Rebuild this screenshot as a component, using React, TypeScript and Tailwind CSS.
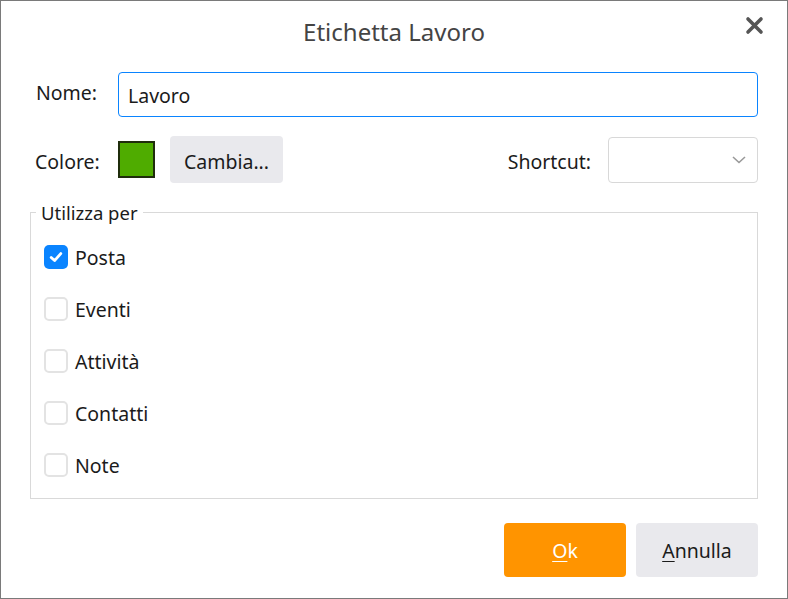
import React from "react";

function Check({ checked, label }: { checked?: boolean; label: string }) {
  return (
    <div className="flex h-[52px] items-center gap-[7px]">
      {checked ? (
        <div className="flex h-[24px] w-[24px] items-center justify-center rounded-[5px] bg-[#0a84ff]">
          <svg width="14" height="14" viewBox="0 0 14 14" fill="none">
            <path d="M2.2 7.4 L5.6 10.6 L11.8 3.6" stroke="white" strokeWidth="2.8" strokeLinecap="round" strokeLinejoin="round" />
          </svg>
        </div>
      ) : (
        <div className="h-[24px] w-[24px] rounded-[5px] border-2 border-[#e3e3e3] bg-white" />
      )}
      <span className="pt-[2px] text-[19.5px] text-[#1b1b1b]">{label}</span>
    </div>
  );
}

export default function App() {
  const uses = ["Posta", "Eventi", "Attività", "Contatti", "Note"];
  return (
    <div
      className="flex h-[599px] w-[788px] flex-col border border-[#7a7a7a] bg-white"
      style={{ fontFamily: '"Noto Sans", "Open Sans", sans-serif' }}
    >
      <div className="relative flex h-[63px] items-center justify-center">
        <div className="-mt-[1px] text-[24px] text-[#444]">Etichetta Lavoro</div>
        <svg className="absolute right-[23px] top-[15px]" width="19" height="19" viewBox="0 0 19 19">
          <path d="M3 3 L16 16 M16 3 L3 16" stroke="#555" strokeWidth="3.6" strokeLinecap="round" />
        </svg>
      </div>

      <div className="mt-[8px] flex items-center pl-[35px] pr-[29px]">
        <div className="-mt-[4px] w-[82px] text-[19.5px] text-[#1b1b1b]">Nome:</div>
        <div className="flex h-[45px] flex-1 items-center rounded-[4px] border border-[#0a84ff] px-[9px] pt-[3px] text-[19.5px] text-[#1b1b1b]">
          Lavoro
        </div>
      </div>

      <div className="mt-[19px] flex items-center pl-[34px] pr-[29px]">
        <div className="w-[83px] pt-[5px] text-[19.5px] text-[#1b1b1b]">Colore:</div>
        <div className="h-[37px] w-[37px] border-2 border-[#1f2d0c] bg-[#4fac00]" />
        <div className="ml-[15px] flex h-[47px] w-[113px] items-center justify-center rounded-[4px] bg-[#e9e9ed] pt-[4px] text-[19.5px] text-[#1b1b1b]">
          Cambia...
        </div>
        <div className="flex-1" />
        <div className="mr-[17px] pt-[5px] text-[19.5px] text-[#1b1b1b]">Shortcut:</div>
        <div className="flex h-[46px] w-[150px] items-center justify-end rounded-[4px] border border-[#d8d8d8] pr-[10px]">
          <svg width="16" height="10" viewBox="0 0 16 10" fill="none">
            <path d="M2 2 L8 7.5 L14 2" stroke="#999" strokeWidth="1.6" />
          </svg>
        </div>
      </div>

      <fieldset className="mx-[29px] mt-[17px] border border-[#d9d9d9] pb-[7px] pl-[13px]">
        <legend className="-ml-[8px] px-[5px] pt-[2px] text-[18.5px] leading-[22px] text-[#1b1b1b]">Utilizza per</legend>
        <div className="mt-[7px] flex flex-col">
          {uses.map((u, i) => (
            <Check key={u} label={u} checked={i === 0} />
          ))}
        </div>
      </fieldset>

      <div className="mt-[24px] flex justify-end gap-[10px] pr-[29px]">
        <div className="flex h-[54px] w-[122px] items-center justify-center rounded-[4px] bg-[#ff9400] pt-[2px] text-[19.5px] text-white">
          <span>
            <span className="underline underline-offset-[3px]">O</span>k
          </span>
        </div>
        <div className="flex h-[54px] w-[122px] items-center justify-center rounded-[4px] bg-[#e9e9ed] pt-[2px] text-[19.5px] text-[#1b1b1b]">
          <span>
            <span className="underline underline-offset-[3px]">A</span>nnulla
          </span>
        </div>
      </div>
    </div>
  );
}
